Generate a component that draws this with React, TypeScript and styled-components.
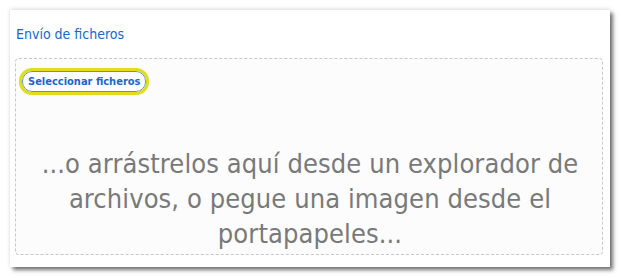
import React, { ReactElement } from 'react';
import styled, { createGlobalStyle } from 'styled-components';

const GlobalStyle = createGlobalStyle`
	body {
		margin: 0;
		background: #ffffff;
		font-family: 'DejaVu Sans Condensed', 'DejaVu Sans', sans-serif;
	}
`;

const Page = styled.div`
	padding: 10px 11px 11px 10px;
`;

const Panel = styled.section`
	width: 600px;
	height: 257px;
	box-sizing: border-box;
	background: #ffffff;
	padding: 15px 7px 12px 5px;
	display: flex;
	flex-direction: column;
	box-shadow: 3px 3px 4px rgba(0, 0, 0, 0.55), 0 -1px 4px rgba(0, 0, 0, 0.12);
`;

const Title = styled.h2`
	margin: 0 0 15px 1px;
	font-size: 14px;
	font-weight: normal;
	line-height: 18px;
	color: #1767cc;
`;

const DropZone = styled.div`
	flex: 1;
	border: 1px dashed #c8c8c8;
	border-radius: 4px;
	background: #fcfcfc;
	padding: 12px 4px 0 6px;
	display: flex;
	flex-direction: column;
`;

const SelectButton = styled.button`
	align-self: flex-start;
	font-family: inherit;
	font-size: 11px;
	font-weight: bold;
	color: #1767cc;
	background: #ffffff;
	border: 1px solid #5d8fd6;
	border-radius: 10px;
	padding: 3px 5px;
	outline: 3px solid #dede1c;
	outline-offset: 0;
	cursor: pointer;
`;

const Hint = styled.p`
	margin: 54px auto 0;
	max-width: 570px;
	text-align: center;
	font-size: 27px;
	letter-spacing: 0.1px;
	line-height: 35px;
	color: #797979;
`;

export default function App(): ReactElement {
	return (
		<>
			<GlobalStyle />
			<Page>
				<Panel>
					<Title>Envío de ficheros</Title>
					<DropZone>
						<SelectButton>Seleccionar ficheros</SelectButton>
						<Hint>
							...o arrástrelos aquí desde un explorador de archivos, o pegue una imagen desde el portapapeles...
						</Hint>
					</DropZone>
				</Panel>
			</Page>
		</>
	);
}
